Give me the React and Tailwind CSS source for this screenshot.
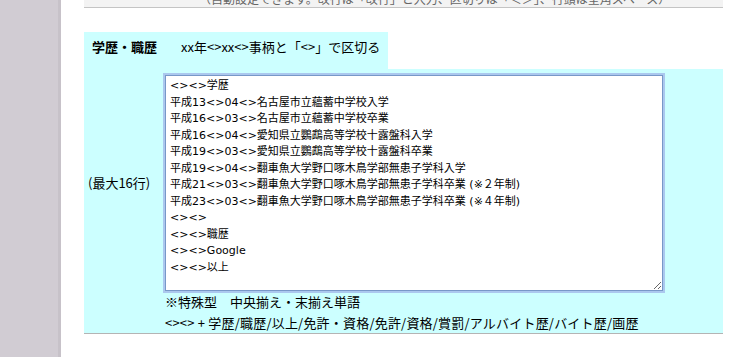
import React from "react";

const lines = [
  "<><>学歴",
  "平成13<>04<>名古屋市立蘊蓄中学校入学",
  "平成16<>03<>名古屋市立蘊蓄中学校卒業",
  "平成16<>04<>愛知県立鸚鵡高等学校十露盤科入学",
  "平成19<>03<>愛知県立鸚鵡高等学校十露盤科卒業",
  "平成19<>04<>翻車魚大学野口啄木鳥学部無患子学科入学",
  "平成21<>03<>翻車魚大学野口啄木鳥学部無患子学科卒業 (※２年制)",
  "平成23<>03<>翻車魚大学野口啄木鳥学部無患子学科卒業 (※４年制)",
  "<><>",
  "<><>職歴",
  "<><>Google",
  "<><>以上",
];

export default function App() {
  return (
    <div
      className="flex min-h-[357px] w-[749px] bg-white text-black"
      style={{ fontFamily: '"Noto Sans CJK JP", sans-serif' }}
    >
      <div className="w-[58px] shrink-0 bg-[#d1ccd3]" />
      <div className="w-[3px] shrink-0 bg-[#c7c2c9]" />
      <div className="ml-[23px] w-[639px] shrink-0">
        <div className="flex h-[8px] items-end overflow-hidden border-b border-[#c4c4c4] bg-[#f3f3f3] pl-[115px]">
          <span className="whitespace-nowrap text-[12px] leading-[12px] text-[#666] -translate-y-[2px]">
            （自動設定できます。改行は「改行」と入力、区切りは「＜＞」、行頭は全角スペース）
          </span>
        </div>
        <div className="mt-[24px] flex h-[37px] w-[304px] items-start bg-[#ccffff] pl-[8px] pt-[5px] text-[13px] leading-[20px]">
          <span className="font-bold">学歴・職歴</span>
          <span className="ml-[24px]">xx年&lt;&gt;xx&lt;&gt;事柄と「&lt;&gt;」で区切る</span>
        </div>
        <div className="grid grid-cols-[81px_1fr] border-b border-[#b4b4b4] bg-[#ccffff] pt-[6px] text-[13px]">
          <div className="self-center pl-[4px] leading-[20px]">(最大16行)</div>
          <textarea
            defaultValue={lines.join("\n")}
            spellCheck={false}
            className="h-[216px] w-[498px] resize rounded-none border border-[#7898c8] bg-white px-[4px] py-[2px] text-[11px] leading-[16.5px] text-black shadow-[0_0_0_2px_#abc8ee] outline-none"
            style={{ fontFamily: '"DejaVu Sans", "Noto Sans CJK JP", sans-serif' }}
          />
          <div />
          <div className="leading-[21px]">
            <div>※特殊型　中央揃え・末揃え単語</div>
            <div className="tracking-[0.2px]">&lt;&gt;&lt;&gt; + 学歴/職歴/以上/免許・資格/免許/資格/賞罰/アルバイト歴/バイト歴/画歴</div>
          </div>
        </div>
      </div>
    </div>
  );
}
